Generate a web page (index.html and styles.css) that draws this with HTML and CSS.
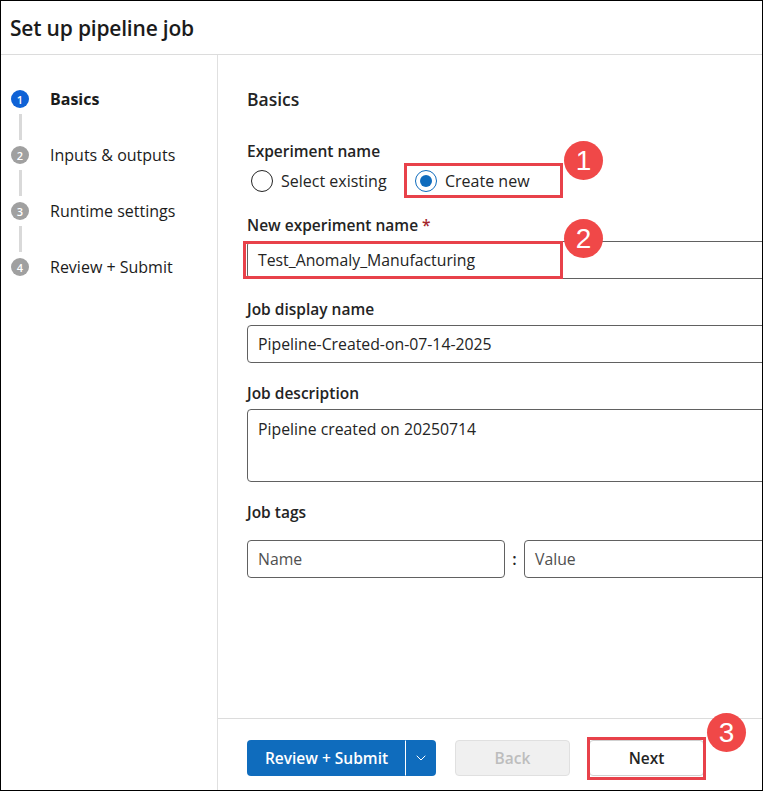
FILE: index.html
```html
<!DOCTYPE html>
<html>
<head>
<meta charset="utf-8">
<link rel="stylesheet" href="styles.css">
</head>
<body>
<div class="frame">
  <header class="header"><h1 class="title">Set up pipeline job</h1></header>
  <div class="body">
    <nav class="nav">
      <div class="step active"><span class="dot">1</span><span class="step-label">Basics</span></div>
      <div class="connector"></div>
      <div class="step"><span class="dot">2</span><span class="step-label">Inputs &amp; outputs</span></div>
      <div class="connector"></div>
      <div class="step"><span class="dot">3</span><span class="step-label">Runtime settings</span></div>
      <div class="connector"></div>
      <div class="step"><span class="dot">4</span><span class="step-label">Review + Submit</span></div>
    </nav>
    <main class="main">
      <div class="content">
        <h2 class="section-title">Basics</h2>
        <div class="field first">
          <div class="label">Experiment name</div>
          <div class="radios">
            <label class="radio"><span class="ring"></span>Select existing</label>
            <label class="radio checked"><span class="ring"></span>Create new</label>
          </div>
        </div>
        <div class="field">
          <div class="label">New experiment name <span class="req">*</span></div>
          <div class="input">Test_Anomaly_Manufacturing</div>
        </div>
        <div class="field">
          <div class="label">Job display name</div>
          <div class="input">Pipeline-Created-on-07-14-2025</div>
        </div>
        <div class="field">
          <div class="label">Job description</div>
          <div class="input textarea">Pipeline created on 20250714</div>
        </div>
        <div class="field tags-field">
          <div class="label">Job tags</div>
          <div class="tags">
            <div class="input tag-name placeholder">Name</div>
            <span class="colon">:</span>
            <div class="input tag-value placeholder">Value</div>
          </div>
        </div>
      </div>
      <footer class="footer">
        <div class="split">
          <button class="btn primary main-btn">Review + Submit</button>
          <button class="btn primary chevron-btn" aria-label="More">
            <svg width="10" height="6" viewBox="0 0 10 6"><path d="M1 1l4 4 4-4" fill="none" stroke="#fff" stroke-width="1" stroke-linecap="round" stroke-linejoin="round"/></svg>
          </button>
        </div>
        <button class="btn disabled">Back</button>
        <button class="btn secondary">Next</button>
      </footer>
    </main>
  </div>

  <div class="hl hl-radio"></div>
  <div class="hl hl-input"></div>
  <div class="hl hl-next"></div>
  <div class="badge b1">1</div>
  <div class="badge b2">2</div>
  <div class="badge b3">3</div>
</div>
</body>
</html>
```

FILE: styles.css
```css
* { box-sizing: border-box; }
html, body { margin: 0; padding: 0; background: #fff; }
body {
  font-family: "Open Sans", "Noto Sans", sans-serif;
  color: #242424;
}
.frame {
  position: relative;
  width: 763px;
  height: 791px;
  border: 1px solid #000;
  display: flex;
  flex-direction: column;
  overflow: hidden;
}
.header {
  height: 54px;
  border-bottom: 1px solid #dcdcdc;
  display: flex;
  align-items: center;
  padding-left: 9px;
  flex: none;
}
.title {
  margin: 0;
  font-size: 21px;
  font-weight: 600;
  letter-spacing: -0.2px;
  color: #1b1b1b;
}
.body {
  flex: 1;
  display: flex;
  min-height: 0;
}
.nav {
  width: 217px;
  flex: none;
  border-right: 1px solid #e0e0e0;
  padding: 35px 0 0 10px;
}
.step {
  display: flex;
  align-items: center;
  height: 18px;
}
.dot {
  width: 18px;
  height: 18px;
  border-radius: 50%;
  background: #a0a0a0;
  color: #fff;
  font-size: 11px;
  font-weight: 600;
  display: flex;
  align-items: center;
  justify-content: center;
  flex: none;
}
.step.active .dot { background: #0f62d6; }
.step-label {
  margin-left: 21px;
  font-size: 16px;
  color: #1b1b1b;
  white-space: nowrap;
}
.step.active .step-label { font-weight: 700; }
.connector {
  width: 3px;
  height: 26px;
  background: #d9d9d9;
  margin: 6px 0 6px 8px;
}
.main {
  flex: 1;
  min-width: 0;
  display: flex;
  flex-direction: column;
  overflow: hidden;
}
.content {
  flex: 1;
  padding: 33px 0 0 29px;
}
.section-title {
  margin: 0 0 30px;
  font-size: 17.5px;
  font-weight: 600;
  line-height: 22px;
}
.field { margin-bottom: 19px; }
.field.first { margin-bottom: 0; }
.label {
  font-size: 15.5px;
  font-weight: 600;
  line-height: 22px;
  margin-bottom: 5px;
  white-space: nowrap;
}
.req { color: #a4262c; font-weight: 600; }
.radios {
  display: flex;
  margin-top: 8px;
  margin-bottom: 22px;
}
.radio {
  display: flex;
  align-items: center;
  font-size: 16px;
  height: 22px;
  padding-left: 4px;
  width: 164px;
}
.ring {
  width: 22px;
  height: 22px;
  border-radius: 50%;
  border: 1px solid #242424;
  margin-right: 8px;
  flex: none;
  display: flex;
  align-items: center;
  justify-content: center;
}
.radio.checked .ring { border-color: #0f6cbd; }
.radio.checked .ring::after {
  content: "";
  width: 12px;
  height: 12px;
  border-radius: 50%;
  background: #0f6cbd;
}
.input {
  width: 560px;
  height: 38px;
  border: 1px solid #616161;
  border-radius: 4px;
  padding: 0 10px;
  font-size: 15.8px;
  display: flex;
  align-items: center;
  white-space: nowrap;
}
.textarea {
  height: 73px;
  align-items: flex-start;
  padding-top: 8px;
}
.tags-field .label { margin-bottom: 17px; }
.tags {
  display: flex;
  align-items: center;
}
.tag-name { width: 258px; flex: none; }
.colon {
  flex: none;
  width: 19px;
  text-align: center;
  font-size: 16px;
  font-weight: 600;
}
.tag-value { width: 260px; flex: none; }
.placeholder { color: #505050; }
.footer {
  flex: none;
  height: 72px;
  border-top: 1px solid #dcdcdc;
  display: flex;
  align-items: flex-start;
  padding: 21px 0 0 29px;
  gap: 19px;
}
.btn {
  height: 36px;
  font-family: inherit;
  font-size: 15.5px;
  font-weight: 600;
  border-radius: 4px;
  border: 1px solid transparent;
  padding: 0;
  cursor: default;
}
.split { display: flex; }
.primary { background: #0f6cbd; color: #fff; }
.main-btn {
  width: 159px;
  border-radius: 4px 0 0 4px;
  border-right: 1px solid #fff;
}
.chevron-btn {
  width: 30px;
  border-radius: 0 4px 4px 0;
  display: flex;
  align-items: center;
  justify-content: center;
}
.disabled {
  width: 115px;
  background: #f0f0f0;
  border-color: #e0e0e0;
  color: #bdbdbd;
}
.secondary {
  width: 115px;
  background: #fff;
  border-color: #d1d1d1;
  color: #242424;
  font-weight: 600;
}
.hl {
  position: absolute;
  border: 3px solid #e8414a;
  pointer-events: none;
}
.hl-radio { left: 403px; top: 162px; width: 159px; height: 35px; }
.hl-input { left: 242px; top: 240px; width: 320px; height: 38px; }
.hl-next { left: 586px; top: 736px; width: 119px; height: 43px; }
.badge {
  position: absolute;
  width: 39px;
  height: 39px;
  border-radius: 50%;
  background: #f04848;
  color: #fff;
  font-family: "Liberation Sans", Arial, sans-serif;
  font-size: 28px;
  display: flex;
  align-items: center;
  justify-content: center;
}
.b1 { left: 563px; top: 140px; }
.b2 { left: 563px; top: 218px; }
.b3 { left: 706px; top: 712px; }
```
